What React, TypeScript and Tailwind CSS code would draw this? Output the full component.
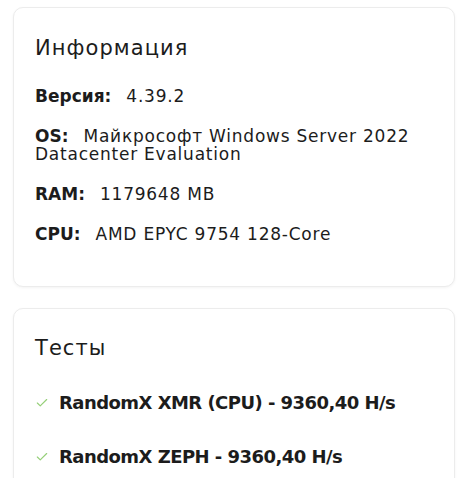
import { Check } from "lucide-react";

// ── Data ──────────────────────────────────────────────────────────────────────

const INFO: { label: string; value: string }[] = [
  { label: "Версия:", value: "4.39.2" },
  { label: "OS:", value: "Майкрософт Windows Server 2022 Datacenter Evaluation" },
  { label: "RAM:", value: "1179648 MB" },
  { label: "CPU:", value: "AMD EPYC 9754 128-Core" },
];

const TESTS = [
  "RandomX XMR (CPU) - 9360,40 H/s",
  "RandomX ZEPH - 9360,40 H/s",
];

// ── Component ─────────────────────────────────────────────────────────────────

export default function App() {
  return (
    <div
      className="min-h-screen bg-white px-[13px] pt-[7px] text-[#1c1c1c] flex flex-col gap-[21px]"
      style={{ fontFamily: "'DejaVu Sans', sans-serif" }}
    >
      {/* Информация */}
      <section className="rounded-[10px] border border-[#ececec] bg-white shadow-[0_1px_3px_rgba(0,0,0,0.05)] px-[21px] pt-[27px] pb-[43px]">
        <h2 className="text-[21px] leading-[26px] font-normal tracking-[0.05em]">Информация</h2>
        <div className="mt-[26px] flex flex-col gap-[22px]">
          {INFO.map((row) => (
            <p key={row.label} className="text-[17px] leading-[18px] tracking-[0.045em] pr-3">
              <span className="font-bold tracking-normal mr-[15px]">{row.label}</span>
              {row.value}
            </p>
          ))}
        </div>
      </section>

      {/* Тесты */}
      <section className="rounded-[10px] border border-[#ececec] bg-white shadow-[0_1px_3px_rgba(0,0,0,0.05)] px-[21px] pt-[26px] pb-[40px]">
        <h2 className="text-[21px] leading-[26px] font-normal tracking-[0.05em]">Тесты</h2>
        <ul className="mt-[31px] flex flex-col gap-[32px]">
          {TESTS.map((t) => (
            <li key={t} className="flex items-center gap-[10px]">
              <Check className="w-[14px] h-[14px] text-[#95cf78]" strokeWidth={2} />
              <span className="text-[18px] leading-[22px] font-bold tracking-[-0.03em]">{t}</span>
            </li>
          ))}
        </ul>
      </section>
    </div>
  );
}
